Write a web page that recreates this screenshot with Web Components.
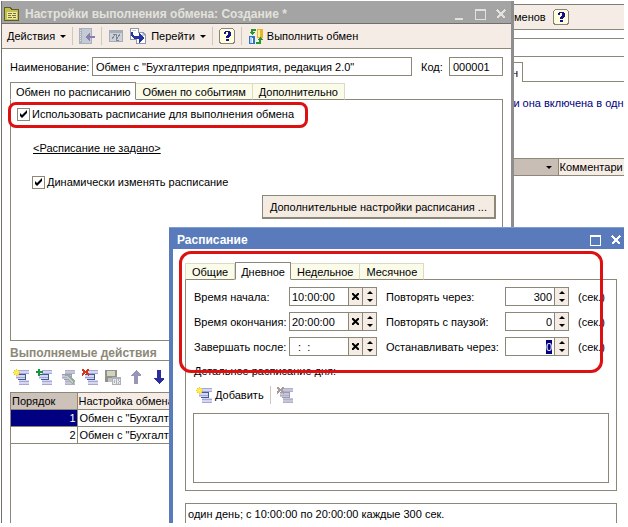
<!DOCTYPE html>
<html lang="ru">
<head>
<meta charset="utf-8">
<title>Настройки выполнения обмена</title>
<style>
    html, body {
        height: 100%;
        margin: 0;
    }

    body {
        background: #fff;
        color: #000;
        font: 11px/14px "Liberation Sans", Arial, sans-serif;
        overflow: hidden;
    }
</style>
</head>
<body>
<exchange-desktop></exchange-desktop>

<script>
const CONTROL_RESET = `
    *, *::before, *::after { box-sizing: border-box; }
    button, input { font: inherit; color: inherit; margin: 0; border-radius: 0; outline: none; }
`;

// Base class: renders the subclass markup into an open shadow root
class UiElement extends HTMLElement {
    constructor() {
        super();
        this.attachShadow({ mode: 'open' });
    }

    connectedCallback() {
        this.shadowRoot.innerHTML = `<style>${CONTROL_RESET}${this.css()}</style>${this.html()}`;
        this.ready();
    }

    attr(name) {
        return (this.getAttribute(name) || '').replace(/"/g, '&quot;');
    }

    css() { return ''; }
    html() { return '<slot></slot>'; }
    ready() {}
}

// Three stacked rows, shared by all list icons
const rows = (light, mid, dark) => `
    <path fill="${light}" d="M6 1h10v4H6zM3 6h9v4H3zM6 11h10v5H6z"/>
    <path fill="${mid}" d="M6 1h10v1H6zM6 4h10v1H6zM3 8h9v1H3zM6 12h10v1H6zM6 15h10v1H6z"/>
    <path fill="${dark}" d="M3 5h10v1H3zM12 6h1v4h-1zM5 10h8v1H5z"/>`;
const LIST = rows('#d6d6f0', '#a6a6d6', '#3c5e94');
const LIST_OFF = rows('#c6c6d8', '#b0b0c8', '#9a9ab4');

const ICONS = {
    form: `
        <path fill="#5e5c28" d="M0 1h6l2 2h7v12H0z"/>
        <path fill="#c2c04e" d="M1 2h4l2 2h7v10H1z"/>
        <path fill="#eceaa8" d="M3 6h10v7H3z"/>
        <path fill="#77752f" d="M4 7h4v1H4zM9 7h3v1H9zM4 9h3v1H4zM8 9h4v1H8zM4 11h4v1H4zM9 11h3v1H9z"/>`,
    back: `
        <path fill="#a9b1be" d="M0 0h13v16H0z"/>
        <path fill="#c4cbd4" d="M3 1h9v14H3z"/>
        <path fill="#e4e6ea" d="M1 2h1v1H1zM1 4h1v1H1zM1 6h1v1H1zM1 8h1v1H1zM1 10h1v1H1zM1 12h1v1H1z"/>
        <path fill="#8580b0" d="M6 9l5-4v3h5v2h-5v3z"/>`,
    refresh: `
        <path fill="#a5adb8" d="M1 2h14v12H1z"/>
        <path fill="#ccd1d7" d="M2 5h12v8H2z"/>
        <path fill="none" stroke="#7f8794" d="M4 11l3-4M5 6h3v3M12 6l-3 5M8 9v3h3"/>`,
    jump: `
        <path fill="#8f97ad" d="M0 0h9v12H0zM6 4h7l3 3v9H6z"/>
        <path fill="#fff" d="M1 1h7v10H1zM7 5h5v3h3v7H7z"/>
        <path fill="#c8cde0" d="M12 5l3 3h-3zM2 2h4v1H2z"/>
        <path fill="#26349e" d="M1 4h2v3l2 1h4V5l5 5-5 5v-4H5L1 8z"/>`,
    help: `
        <rect x="0.5" y="0.5" width="15" height="15" rx="3" fill="#ffffde" stroke="#85857a"/>
        <path fill="#14148a" d="M5 4h1V3h5v1h1v4h-1v1h-1v1H7V8h1V7h1V4H7v2H5zM7 11h3v2H7z"/>`,
    run: `
        <path fill="#2c75c0" d="M1 8h6v8H1z"/>
        <path fill="#aed0f4" d="M2 9h2v6H2z"/>
        <path fill="#fff" d="M4 10h1v5H4z"/>
        <path fill="#e7b528" d="M9 1h6v9H9z"/>
        <path fill="#fff0a0" d="M10 2h2v7h-2z"/>
        <path fill="none" stroke="#28952f" stroke-width="2" d="M8 2H4v3M8 15h4v-4"/>
        <path fill="#28952f" d="M1 4h6L4 7zM9 12h6l-3-3z"/>`,
    insert: `${LIST}
        <path fill="#e8c91e" d="M3 0h1v7H3zM0 3h7v1H0zM1 1h1v1H1zM5 1h1v1H5zM1 5h1v1H1zM5 5h1v1H5z"/>
        <path fill="#ffe94a" d="M2 1h3v5H2zM1 2h5v3H1z"/>
        <path fill="#fffbc0" d="M3 3h1v1H3z"/>`,
    copy: `${LIST}
        <path fill="#16983a" d="M2 0h2v7H2zM0 2h7v2H0z"/>`,
    edit: `${LIST_OFF}
        <path fill="#96ab9b" d="M6 6l3-1 7 7-2 4z"/>
        <path fill="#c3d0c4" d="M8 7l6 6-1 1-6-7z"/>`,
    remove: `${LIST}
        <path fill="none" stroke="#d6371c" stroke-width="2" d="M0 0l7 6M7 0L0 6"/>`,
    removeoff: `${LIST_OFF}
        <path fill="none" stroke="#ab9c9c" stroke-width="2" d="M0 0l7 6M7 0L0 6"/>`,
    save: `
        <path fill="#92948c" d="M0 1h12v12H0z"/>
        <path fill="#d2d4c0" d="M2 2h8v5H2z"/>
        <path fill="#bfc1c3" d="M3 9h4v4H3z"/>
        <path fill="#adb0b8" d="M7 8h9v8H7z"/>
        <path fill="#e8eaee" d="M8 10h3v1H8zM8 11h1v3H8zM10 11h1v3h-1zM8 14h3v1H8zM12 10h1v5h-1zM14 10h1v2h-1zM13 12h1v1h-1zM14 13h1v2h-1z"/>`,
    up: `<path fill="#9796b8" d="M8 1l5 5v1h-3v8H6V7H3V6z"/>`,
    down: `<path fill="#2c2c9c" d="M8 15l5-5V9h-3V1H6v8H3v1z"/>`,
    minimize: `<path fill="currentColor" d="M4 12h8v2H4z"/>`,
    maximize: `<path fill="currentColor" d="M3 3h11v11H3zM4 5v8h9V5z" fill-rule="evenodd"/>`,
    close: `<path fill="none" stroke="currentColor" stroke-width="2" d="M4 4l8 8M12 4l-8 8"/>`
};

class UiIcon extends UiElement {
    css() {
        return `
            :host { display: block; flex: none; width: 16px; height: 16px; }
            svg { display: block; }
        `;
    }

    html() {
        return `<svg width="16" height="16" viewBox="0 0 16 16" shape-rendering="crispEdges" aria-hidden="true">${ICONS[this.attr('name')]}</svg>`;
    }
}

class UiWindow extends UiElement {
    css() {
        return `
            :host {
                --frame: #a4a4a4;
                --title: #e2e2dc;
                display: flex;
                flex-direction: column;
                background: #fff;
                overflow: hidden;
            }
            :host([active]) { --frame: #5a7bbb; --title: #fff; }
            header {
                display: flex;
                flex: none;
                align-items: center;
                gap: 5px;
                height: 22px;
                padding: 3px 2px 0;
                background: var(--frame);
                color: var(--title);
                font-size: 12px;
                font-weight: bold;
                white-space: nowrap;
            }
            h1 { flex: 1; margin: 0; font: inherit; }
            :host([active]) header { border-top: 1px solid #7f9cd0; padding-right: 0; }
            :host([active]) h1 { padding-left: 6px; }
            button { padding: 0; border: 0; background: none; }
            .body { display: flex; flex-direction: column; flex: 1; min-height: 0; border-top: 1px solid #6f6f6c; }
            :host([active]) .body { border-top: 0; }
        `;
    }

    html() {
        const min = this.hasAttribute('minimizable')
            ? '<button aria-label="Свернуть"><ui-icon name="minimize"></ui-icon></button>' : '';
        return `
            <header>
                <slot name="icon"></slot>
                <h1>${this.attr('caption')}</h1>
                ${min}
                <button aria-label="Развернуть"><ui-icon name="maximize"></ui-icon></button>
                <button aria-label="Закрыть"><ui-icon name="close"></ui-icon></button>
            </header>
            <div class="body"><slot></slot></div>
        `;
    }
}

class ToolBar extends UiElement {
    css() {
        return `
            :host {
                display: flex;
                flex: none;
                align-items: center;
                gap: 6px;
                height: 25px;
                padding: 0 5px;
                background: #f5ece5;
                border-bottom: 1px solid #8c8878;
                white-space: nowrap;
            }
            :host([plain]) { height: 18px; padding: 0 3px; background: none; border: 0; }
            :host([wide]) { gap: 7px; }
            ::slotted(hr) { width: 1px; height: 18px; margin: 0; border: 0; background: #cfc8bc; }
        `;
    }
}

class ToolButton extends UiElement {
    css() {
        return `
            :host { display: block; flex: none; }
            button { display: flex; align-items: center; gap: 3px; padding: 0; border: 0; background: none; white-space: nowrap; }
            :host([menu]) button { gap: 5px; }
            .arrow { border: 3px solid transparent; border-top-color: #000; border-bottom: 0; }
        `;
    }

    html() {
        const icon = this.attr('icon');
        return `
            <button aria-label="${this.attr('hint') || this.textContent}">
                ${icon ? `<ui-icon name="${icon}"></ui-icon>` : ''}
                <slot></slot>
                ${this.hasAttribute('menu') ? '<span class="arrow"></span>' : ''}
            </button>
        `;
    }
}

// Tabs come from the "tabs" attribute, the page of the current one is slotted
class TabPanel extends UiElement {
    css() {
        return `
            :host { display: flex; flex-direction: column; flex: none; }
            nav { display: flex; align-items: flex-end; height: 18px; margin-bottom: -1px; position: relative; }
            button {
                height: 17px;
                padding: 1px 6px 0;
                border: 1px solid #dcd9c4;
                border-width: 1px 1px 0 0;
                border-bottom: 1px solid #8c8878;
                background: #fbfbea;
                white-space: nowrap;
            }
            button:first-child { border-left-width: 1px; }
            button[aria-selected="true"] {
                height: 18px;
                padding: 1px 5px 0;
                border: 1px solid #8c8878;
                border-bottom-color: #fff;
                background: #fff;
            }
            .page { border: 1px solid #8c8878; }
        `;
    }

    html() {
        const current = Number(this.attr('current'));
        const tabs = this.attr('tabs').split('|')
            .map((t, i) => `<button role="tab" aria-selected="${i === current}">${t}</button>`).join('');
        return `<nav role="tablist">${tabs}</nav><div class="page" role="tabpanel"><slot></slot></div>`;
    }
}

class TextField extends UiElement {
    css() {
        return `
            :host { display: flex; align-items: center; min-width: 0; }
            label { flex: none; width: var(--label, auto); white-space: nowrap; }
            input { flex: 1; min-width: 0; width: 100%; height: 19px; padding: 0 3px; border: 1px solid #8c8878; background: #fff; }
        `;
    }

    html() {
        return `<label for="f">${this.attr('label')}</label><input id="f" value="${this.attr('value')}">`;
    }
}

class SpinField extends UiElement {
    css() {
        return `
            :host { display: flex; align-items: center; }
            label { flex: none; width: var(--label); white-space: nowrap; }
            .box { display: flex; flex: none; width: var(--box); height: 19px; border: 1px solid #8c8878; background: #fff; }
            input { flex: 1; min-width: 0; width: 100%; padding: 0 2px; border: 0; background: none; }
            :host([numeric]) input { text-align: right; }
            input::selection { background: #000080; color: #fff; }
            button { display: grid; place-content: center; flex: none; width: 14px; padding: 0; border: 0; border-left: 1px solid #8c8878; background: #f5ece5; }
            .spin { gap: 5px; }
            .spin::before, .spin::after { content: ""; border: 3px solid transparent; }
            .spin::before { border-top: 0; border-bottom-color: #000; }
            .spin::after { border-bottom: 0; border-top-color: #000; }
            .unit { margin-left: 9px; }
        `;
    }

    html() {
        const numeric = this.hasAttribute('numeric');
        return `
            <label for="f">${this.attr('label')}</label>
            <div class="box">
                <input id="f" value="${this.attr('value')}">
                ${numeric ? '' : `<button aria-label="Очистить">
                    <svg width="7" height="7" viewBox="0 0 7 7"><path fill="none" stroke="#000" stroke-width="2" d="M0 0l7 7M7 0L0 7"/></svg>
                </button>`}
                <button class="spin" aria-label="Изменить"></button>
            </div>
            ${numeric ? '<span class="unit">(сек.)</span>' : ''}
        `;
    }

    ready() {
        if (this.hasAttribute('editing')) {
            const input = this.shadowRoot.querySelector('input');
            input.focus();
            input.select();
        }
    }
}

class CheckField extends UiElement {
    css() {
        return `
            :host { display: flex; }
            label { display: flex; align-items: center; gap: 2px; height: 14px; white-space: nowrap; }
            input {
                appearance: none;
                width: 13px;
                height: 13px;
                border: 1px solid #8c8878;
                background: #fff;
            }
            input:checked {
                background: #fff url("data:image/svg+xml,%3Csvg xmlns='http://www.w3.org/2000/svg' width='11' height='11'%3E%3Cpath d='M2 4v3l2 2 5-5V1L4 6z'/%3E%3C/svg%3E") center no-repeat;
            }
        `;
    }

    html() {
        return `<label><input type="checkbox" checked><slot></slot></label>`;
    }
}

// Red rounded outline laid over the controls it points out
class RedMark extends UiElement {
    css() {
        return `
            :host {
                position: absolute;
                z-index: 1;
                border: 3px solid #dd1111;
                border-radius: var(--radius, 8px);
                pointer-events: none;
            }
        `;
    }
}

class ActionTable extends UiElement {
    css() {
        return `
            :host { display: block; flex: 1; border: 1px solid #8c8878; border-bottom: 0; overflow: hidden; }
            table { width: 100%; border-collapse: collapse; table-layout: fixed; }
            th, td {
                height: 17px;
                padding: 0 2px;
                border: 1px solid #8c8878;
                border-width: 0 0 1px 1px;
                text-align: left;
                font-weight: normal;
                white-space: nowrap;
            }
            th { height: 16px; padding: 0 1px; background: #f5ece5; }
            th:first-child { width: 66px; background: #cdc2ba; }
            th:first-child, td:first-child { border-left: 0; }
            td:first-child { padding-right: 1px; text-align: right; }
            .current td:first-child { background: #000080; color: #fff; }
        `;
    }

    html() {
        return `
            <table>
                <thead><tr><th>Порядок</th><th>Настройка обмена</th></tr></thead>
                <tbody>
                    <tr class="current"><td>1</td><td>Обмен с "Бухгалтерия</td></tr>
                    <tr><td>2</td><td>Обмен с "Бухгалтерия</td></tr>
                </tbody>
            </table>
        `;
    }
}

class ExchangeList extends UiElement {
    css() {
        return `
            :host { display: block; background: #fff; border-top: 1px solid #7c7c78; overflow: hidden; white-space: nowrap; }
            tool-bar { padding-left: 10px; }
            .filter { height: 19px; margin-top: 8px; border: 1px solid #8c8878; border-width: 1px 0; }
            .tabs { display: flex; height: 25px; padding-top: 5px; }
            .tab { flex: none; width: 19px; padding: 3px 4px 0 0; text-align: right; border: 1px solid #8c8878; border-width: 1px 1px 0 0; }
            .rest { flex: 1; border-bottom: 1px solid #8c8878; }
            p { margin: 14px 0 48px 3px; color: #000080; }
            table { width: 100%; border-collapse: collapse; table-layout: fixed; }
            th { height: 17px; padding: 0 1px; border: 1px solid #8c8878; border-width: 1px 0; background: #f5ece5; text-align: left; font-weight: normal; }
            th:first-child { width: 54px; padding-right: 6px; border-right-width: 1px; background: #c9beb6; }
            .sort { display: block; width: 0; margin-left: auto; border: 3px solid transparent; border-top-color: #000; border-bottom: 0; }
        `;
    }

    html() {
        return `
            <tool-bar wide>
                <tool-button>менов</tool-button>
                <tool-button icon="help" hint="Справка"></tool-button>
            </tool-bar>
            <div class="filter"></div>
            <div class="tabs"><div class="tab">н</div><div class="rest"></div></div>
            <p>ли она включена в одн</p>
            <table><thead><tr><th><span class="sort"></span></th><th>Комментари</th></tr></thead></table>
        `;
    }
}

class ExchangeSettings extends UiElement {
    css() {
        return `
            :host { display: flex; flex-direction: column; flex: 1; min-height: 0; }
            .form { display: flex; flex-direction: column; flex: 1; padding: 8px 8px 0; }
            .names { display: flex; gap: 9px; margin-bottom: 6px; }
            .name { --label: 82px; flex: 1; }
            .code { --label: 28px; width: 82px; }
            .schedule {
                position: relative;
                display: flex;
                flex-direction: column;
                align-items: flex-start;
                gap: 20px;
                min-height: 240px;
                padding: 7px 6px 6px;
            }
            .inner { margin-left: 15px; }
            a { margin-left: 16px; color: #000; text-decoration: underline; }
            .more { align-self: flex-end; height: 24px; margin-top: -14px; padding: 0 7px; border: 1px solid #8c8878; border-right-width: 2px; border-bottom-width: 2px; background: #f4ebe2; }
            red-mark { top: 2px; left: -3px; width: 300px; height: 26px; }
            h2 { margin: 5px 0 7px; border-bottom: 1px solid #8c8878; color: #8c8878; font-size: 12px; line-height: 14px; }
            .actions { margin-bottom: 6px; }
        `;
    }

    html() {
        return `
            <tool-bar>
                <tool-button menu>Действия</tool-button>
                <hr>
                <tool-button icon="back" hint="Назад"></tool-button>
                <hr>
                <tool-button icon="refresh" hint="Перечитать"></tool-button>
                <tool-button icon="jump" menu>Перейти</tool-button>
                <hr>
                <tool-button icon="help" hint="Справка"></tool-button>
                <hr>
                <tool-button icon="run">Выполнить обмен</tool-button>
            </tool-bar>
            <div class="form">
                <div class="names">
                    <text-field class="name" label="Наименование:" value="Обмен с &quot;Бухгалтерия предприятия, редакция 2.0&quot;"></text-field>
                    <text-field class="code" label="Код:" value="000001"></text-field>
                </div>
                <tab-panel tabs="Обмен по расписанию|Обмен по событиям|Дополнительно" current="0">
                    <div class="schedule">
                        <check-field>Использовать расписание для выполнения обмена</check-field>
                        <a href="#">&lt;Расписание не задано&gt;</a>
                        <check-field class="inner">Динамически изменять расписание</check-field>
                        <button class="more">Дополнительные настройки расписания ...</button>
                        <red-mark></red-mark>
                    </div>
                </tab-panel>
                <h2>Выполняемые действия</h2>
                <tool-bar plain wide class="actions">
                    <tool-button icon="insert" hint="Добавить"></tool-button>
                    <tool-button icon="copy" hint="Скопировать"></tool-button>
                    <tool-button icon="edit" hint="Изменить"></tool-button>
                    <tool-button icon="remove" hint="Удалить"></tool-button>
                    <tool-button icon="save" hint="Записать"></tool-button>
                    <tool-button icon="up" hint="Вверх"></tool-button>
                    <tool-button icon="down" hint="Вниз"></tool-button>
                </tool-bar>
                <action-table></action-table>
            </div>
        `;
    }
}

class ScheduleForm extends UiElement {
    css() {
        return `
            :host { display: flex; flex-direction: column; position: relative; padding: 13px 7px 0 12px; border-left: 4px solid #5a7bbb; flex: 1; min-height: 0; }
            .day { padding: 7px; }
            .fields { display: grid; grid-template-columns: auto 1fr; gap: 6px 9px; padding-left: 1px; }
            .fields spin-field { --label: 95px; --box: 88px; }
            .fields spin-field[numeric] { --label: 119px; --box: 64px; }
            .title { margin: 8px 0 8px 1px; }
            .details { height: 70px; margin-top: 9px; border: 1px solid #8c8878; }
            .summary { flex: none; height: 24px; margin-top: 12px; padding: 3px 2px; border: 1px solid #8c8878; white-space: nowrap; }
            red-mark { --radius: 12px; top: 2px; left: 6px; right: 21px; height: 122px; }
        `;
    }

    html() {
        return `
            <tab-panel tabs="Общие|Дневное|Недельное|Месячное" current="1">
                <div class="day">
                    <div class="fields">
                        <spin-field label="Время начала:" value="10:00:00"></spin-field>
                        <spin-field numeric label="Повторять через:" value="300"></spin-field>
                        <spin-field label="Время окончания:" value="20:00:00"></spin-field>
                        <spin-field numeric label="Повторять с паузой:" value="0"></spin-field>
                        <spin-field label="Завершать после:" value="  :  :"></spin-field>
                        <spin-field numeric editing label="Останавливать через:" value="0"></spin-field>
                    </div>
                    <div class="title">Детальное расписание дня:</div>
                    <tool-bar plain>
                        <tool-button icon="insert">Добавить</tool-button>
                        <hr>
                        <tool-button icon="removeoff" hint="Удалить"></tool-button>
                    </tool-bar>
                    <div class="details"></div>
                </div>
            </tab-panel>
            <div class="summary">один день; с 10:00:00 по 20:00:00 каждые 300 сек.</div>
            <red-mark></red-mark>
        `;
    }
}

class ExchangeDesktop extends UiElement {
    css() {
        return `
            :host { display: block; position: relative; height: calc(100vh - 4px); overflow: hidden; }
            exchange-list, ui-window { position: absolute; bottom: 0; }
            exchange-list { top: 4px; left: 504px; right: 4px; }
            .settings { top: 1px; left: 1px; width: 513px; border-left: 1px solid #6f6f6c; border-right: 3px solid #8e8e8e; }
            .schedule { top: 227px; left: 169px; right: 4px; }
        `;
    }

    html() {
        return `
            <exchange-list></exchange-list>
            <ui-window class="settings" minimizable caption="Настройки выполнения обмена: Создание *">
                <ui-icon slot="icon" name="form"></ui-icon>
                <exchange-settings></exchange-settings>
            </ui-window>
            <ui-window class="schedule" active caption="Расписание">
                <schedule-form></schedule-form>
            </ui-window>
        `;
    }
}

customElements.define('ui-icon', UiIcon);
customElements.define('ui-window', UiWindow);
customElements.define('tool-bar', ToolBar);
customElements.define('tool-button', ToolButton);
customElements.define('tab-panel', TabPanel);
customElements.define('text-field', TextField);
customElements.define('spin-field', SpinField);
customElements.define('check-field', CheckField);
customElements.define('red-mark', RedMark);
customElements.define('action-table', ActionTable);
customElements.define('exchange-list', ExchangeList);
customElements.define('exchange-settings', ExchangeSettings);
customElements.define('schedule-form', ScheduleForm);
customElements.define('exchange-desktop', ExchangeDesktop);
</script>
</body>
</html>
